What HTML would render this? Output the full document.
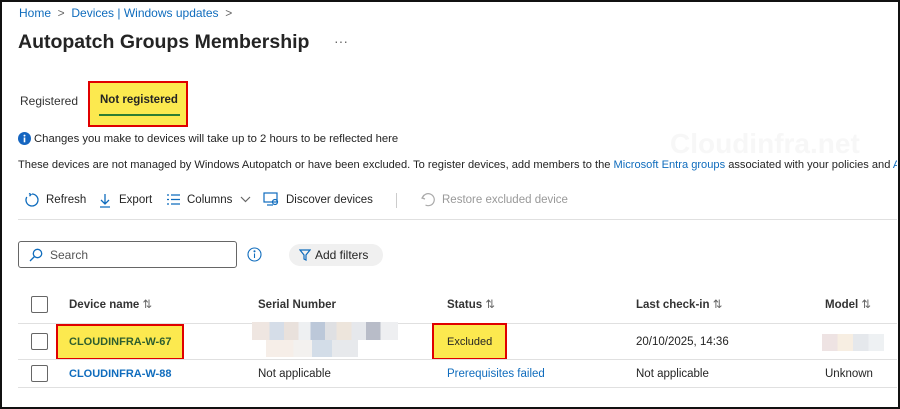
<!DOCTYPE html><html><head><style>
body{margin:0;width:900px;height:409px;position:relative;overflow:hidden;background:#fff;font-family:"Liberation Sans",sans-serif;color:#242424}
.a{position:absolute;white-space:nowrap}
.frame{position:absolute;left:0;top:0;width:896px;height:405px;border:2px solid #111;z-index:5;pointer-events:none}
.clip{position:absolute;left:0;top:0;width:897px;height:409px;overflow:hidden}
.l{color:#0f6cbd}
.cb{position:absolute;width:15px;height:15px;border:1px solid #666;border-radius:2px;background:#fff}
.hl{position:absolute;background:#fce94f;border:2px solid #e00000;box-sizing:border-box}
.line{position:absolute;height:1px;background:#e0e0e0}
.h{font-size:11.5px;font-weight:bold;color:#333;line-height:14px}
.t{font-size:11.5px;line-height:14px}
.tb{font-size:11.5px;top:193px;line-height:14px}
</style></head><body>
<div class="frame"></div>
<div class="clip">
<div class="a l" style="left:19px;top:6px;font-size:12px">Home <span style="color:#666">&nbsp;&gt;&nbsp;</span> Devices | Windows updates <span style="color:#666">&nbsp;&gt;</span></div>
<div class="a" style="left:18px;top:31px;font-size:19.5px;font-weight:600">Autopatch Groups Membership</div>
<div class="a" style="left:334px;top:33px;font-size:14px;color:#666">···</div>
<div class="a" style="left:20px;top:94px;font-size:12px;color:#333">Registered</div>
<div class="hl" style="left:88px;top:81px;width:100px;height:46px"></div>
<div class="a" style="left:100px;top:94px;font-size:11.5px;font-weight:bold">Not registered</div>
<div class="a" style="left:99px;top:114px;width:81px;height:2px;background:#2e7d32"></div>
<svg class="a" style="left:18px;top:132px" width="13" height="13"><circle cx="6.5" cy="6.5" r="6.5" fill="#1565c0"/><rect x="5.7" y="5.5" width="1.6" height="4.8" fill="#fff"/><circle cx="6.5" cy="3.6" r="1" fill="#fff"/></svg>
<div class="a" style="left:34px;top:132px;font-size:11.3px;line-height:14px">Changes you make to devices will take up to 2 hours to be reflected here</div>
<div class="a" style="left:18px;top:158px;font-size:11.1px;line-height:14px">These devices are not managed by Windows Autopatch or have been excluded. To register devices, add members to the <span class="l">Microsoft Entra groups</span> associated with your policies and <span class="l">A</span></div>
<div class="a" style="left:670px;top:128px;font-size:28px;font-weight:bold;color:#f7f7f7">Cloudinfra.net</div>
<svg class="a" style="left:24px;top:192px" width="16" height="16" fill="none" stroke="#0f6cbd" stroke-width="1.3"><path d="M8 2a6 6 0 1 1-5.2 3"/><path d="M5 1.5l2 1-1.5 1.7"/></svg>
<div class="a tb" style="left:46px">Refresh</div>
<svg class="a" style="left:99px;top:192px" width="12" height="16" fill="none" stroke="#0f6cbd" stroke-width="1.3"><path d="M6 2v10M2 8l4 4 4-4M1 15h10"/></svg>
<div class="a tb" style="left:119px">Export</div>
<svg class="a" style="left:166px;top:193px" width="15" height="13" fill="none" stroke="#0f6cbd" stroke-width="1.3"><path d="M1 2h2M5 2h9M1 6.5h2M5 6.5h9M1 11h2M5 11h9"/></svg>
<div class="a tb" style="left:187px">Columns</div>
<svg class="a" style="left:240px;top:196px" width="11" height="8" fill="none" stroke="#666" stroke-width="1.2"><path d="M1 1l4.5 4.5L10 1"/></svg>
<svg class="a" style="left:263px;top:192px" width="17" height="15" fill="none" stroke="#0f6cbd" stroke-width="1.2"><rect x="1" y="1" width="13" height="9"/><circle cx="12" cy="10" r="2.5"/><path d="M4 13h6"/></svg>
<div class="a tb" style="left:286px">Discover devices</div>
<div class="a" style="left:396px;top:193px;width:1px;height:15px;background:#ccc"></div>
<svg class="a" style="left:421px;top:192px" width="14" height="16" fill="none" stroke="#aaa" stroke-width="1.2"><path d="M3 3l-2 3 3 1"/><path d="M1.5 6a6 6 0 1 1 3 7"/></svg>
<div class="a tb" style="left:442px;color:#999">Restore excluded device</div>
<div class="line" style="left:18px;top:219px;width:880px"></div>
<div class="a" style="left:18px;top:241px;width:219px;height:27px;border:1px solid #666;border-radius:3px;box-sizing:border-box"></div>
<svg class="a" style="left:29px;top:248px" width="14" height="14" fill="none" stroke="#0f6cbd" stroke-width="1.3"><circle cx="8.5" cy="5.5" r="4.2"/><path d="M5.5 8.5L1 13"/></svg>
<div class="a" style="left:50px;top:248px;font-size:12px;color:#555">Search</div>
<svg class="a" style="left:247px;top:247px" width="15" height="15" fill="none" stroke="#0f6cbd" stroke-width="1.1"><circle cx="7.5" cy="7.5" r="6.5"/><path d="M7.5 6.5v4.5"/><circle cx="7.5" cy="4.3" r=".5" fill="#0f6cbd"/></svg>
<div class="a" style="left:289px;top:244px;width:94px;height:22px;background:#f0f0f0;border-radius:11px"></div>
<svg class="a" style="left:299px;top:249px" width="12" height="12" fill="none" stroke="#0f6cbd" stroke-width="1.2"><path d="M1 1h10L7 6v5L5 10V6z"/></svg>
<div class="a" style="left:315px;top:248px;font-size:12px">Add filters</div>
<div class="cb" style="left:31px;top:296px"></div>
<div class="a h" style="left:69px;top:298px">Device name <span style="font-weight:normal;color:#666">⇅</span></div>
<div class="a h" style="left:258px;top:298px">Serial Number</div>
<div class="a h" style="left:447px;top:298px">Status <span style="font-weight:normal;color:#666">⇅</span></div>
<div class="a h" style="left:636px;top:298px">Last check-in <span style="font-weight:normal;color:#666">⇅</span></div>
<div class="a h" style="left:825px;top:298px">Model <span style="font-weight:normal;color:#666">⇅</span></div>
<div class="line" style="left:18px;top:323px;width:880px"></div>
<div class="cb" style="left:31px;top:333px"></div>
<div class="hl" style="left:56px;top:324px;width:128px;height:36px"></div>
<div class="a t" style="left:69px;top:335px;font-size:11px;font-weight:bold;color:#2e5e2e">CLOUDINFRA-W-67</div>
<div class="a" style="left:252px;top:322px;width:146px;height:18px;background:linear-gradient(90deg,#efe6e1 0 12%,#d5dde8 12% 22%,#e9e1dc 22% 32%,#eef0f2 32% 40%,#bcc8d9 40% 50%,#dfe0e3 50% 58%,#ede5dc 58% 68%,#e6e8ec 68% 78%,#b8bcc8 78% 88%,#eeeff1 88%)"></div>
<div class="a" style="left:266px;top:340px;width:92px;height:17px;background:linear-gradient(90deg,#f6eee8 0 30%,#f3f1ef 30% 50%,#d3dde8 50% 72%,#e7e9ec 72%)"></div>
<div class="hl" style="left:432px;top:323px;width:75px;height:37px"></div>
<div class="a t" style="left:447px;top:335px;font-size:11px">Excluded</div>
<div class="a t" style="left:636px;top:335px">20/10/2025, 14:36</div>
<div class="a" style="left:822px;top:334px;width:62px;height:17px;background:linear-gradient(90deg,#eee3e3 0 25%,#f7eee2 25% 50%,#e5e8ec 50% 75%,#eef1f3 75%)"></div>
<div class="line" style="left:18px;top:359px;width:880px"></div>
<div class="cb" style="left:31px;top:365px"></div>
<div class="a t l" style="left:69px;top:367px;font-size:11px;font-weight:bold">CLOUDINFRA-W-88</div>
<div class="a t" style="left:258px;top:367px">Not applicable</div>
<div class="a t l" style="left:447px;top:367px">Prerequisites failed</div>
<div class="a t" style="left:636px;top:367px">Not applicable</div>
<div class="a t" style="left:825px;top:367px">Unknown</div>
<div class="line" style="left:18px;top:387px;width:880px"></div>
</div>
</body></html>
